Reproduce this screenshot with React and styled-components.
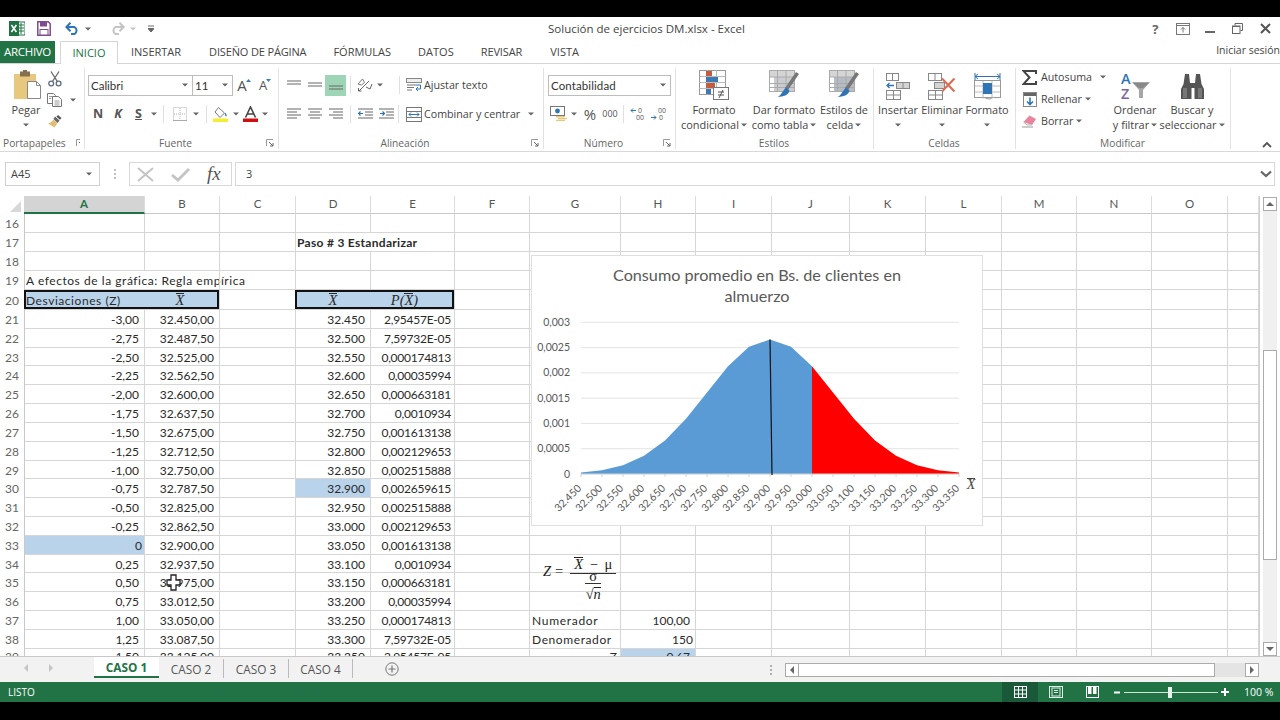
import React from 'react';
import styled, { createGlobalStyle } from 'styled-components';

const Global = createGlobalStyle`
  html, body { margin: 0; padding: 0; background: #000; }
  body { font-family: "Open Sans", "Noto Sans", sans-serif; overflow: hidden; }
  * { box-sizing: border-box; }
`;

const GREEN = '#217346';
const UI = '"Open Sans", "Noto Sans", sans-serif';
const CELL = 'Lato, "Open Sans", sans-serif';
const MATH = '"Liberation Serif", serif';

const Page = styled.div`width:1280px;height:720px;background:#000;display:flex;flex-direction:column;overflow:hidden;`;
const Black = styled.div`height:${p => p.$h}px;flex:none;background:#000;`;
const Win = styled.div`height:685px;flex:none;background:#fff;display:flex;flex-direction:column;color:#444;`;

/* title bar */
const TitleBar = styled.div`height:23px;flex:none;display:flex;align-items:center;`;
const Qat = styled.div`width:548px;flex:none;display:flex;align-items:center;padding-left:9px;`;
const QatSlot = styled.span`display:flex;align-items:center;margin-left:${p => p.$ml || 0}px;`;
const Title = styled.div`font-size:11.5px;color:#444;white-space:nowrap;`;
const WinCtl = styled.div`margin-left:auto;display:flex;align-items:center;padding-right:1px;`;
const WinBtn = styled.span`width:27.5px;display:flex;justify-content:center;align-items:center;font-weight:700;font-size:13px;color:#666;`;

/* tabs */
const TabRow = styled.div`height:23px;flex:none;display:flex;align-items:flex-end;position:relative;z-index:1;`;
const FileTab = styled.div`width:55px;height:22px;background:${GREEN};color:#fff;font-size:11.5px;padding-bottom:1px;display:flex;align-items:center;justify-content:center;letter-spacing:-.3px;`;
const ActiveTab = styled.div`margin-left:5px;width:58px;height:23px;margin-bottom:-1px;padding-bottom:2px;background:#fff;border:1px solid #d5d5d5;border-bottom:none;color:${GREEN};font-size:11px;display:flex;align-items:center;justify-content:center;`;
const Tab = styled.div`height:22px;font-size:11px;color:#444;padding-bottom:1px;display:flex;align-items:center;margin-left:${p => p.$ml}px;white-space:nowrap;letter-spacing:${p => p.$ls || 0}px;`;
const SignIn = styled.div`margin-left:auto;height:24px;font-size:10.5px;color:#444;display:flex;align-items:center;white-space:nowrap;align-self:flex-start;margin-top:-2px;`;

/* ribbon */
const Ribbon = styled.div`height:89px;flex:none;display:flex;border-top:1px solid #d5d5d5;border-bottom:1px solid #d8d8d8;padding-top:4px;`;
const Group = styled.div`width:${p => p.$w}px;flex:none;display:flex;flex-direction:column;border-right:1px solid #e2e2e2;margin-bottom:2px;`;
const GroupBody = styled.div`flex:1;display:flex;min-height:0;`;
const GroupFoot = styled.div`height:16px;flex:none;display:flex;align-items:center;font-size:10.2px;color:#666;white-space:nowrap;margin-bottom:-2px;padding-right:${p => p.$pr || 4}px;padding-left:${p => p.$pl || 0}px;`;
const FootText = styled.span`flex:1;text-align:center;`;
const FootGap = styled.span`width:10px;flex:none;`;
const Stack = styled.div`display:flex;flex-direction:column;width:${p => p.$w}px;flex:none;margin-left:${p => p.$ml || 0}px;margin-top:${p => p.$mt || 0}px;padding-top:${p => p.$pt || 0}px;`;
const Big = styled.div`width:${p => p.$w}px;flex:none;display:flex;flex-direction:column;align-items:center;margin-left:${p => p.$ml || 0}px;font-size:10.9px;color:#444;line-height:15px;`;
const BigIcon = styled.div`height:32px;flex:none;display:flex;align-items:flex-end;justify-content:center;margin-bottom:2px;padding-left:${p => p.$pl || 0}px;`;
const BigLine = styled.div`display:flex;align-items:center;gap:2px;white-space:nowrap;height:15px;`;
const Row = styled.div`height:${p => p.$h || 22}px;display:flex;align-items:center;flex:none;`;
const Field = styled.div`height:21px;width:${p => p.$w}px;flex:none;border:1px solid #bdbdbd;margin-left:${p => p.$ml ?? 0}px;display:flex;align-items:center;justify-content:space-between;font-size:11.5px;color:#333;padding:0 4px 0 2px;background:#fff;font-family:${p => p.$cell ? CELL : UI};letter-spacing:${p => p.$ls || 0}px;`;
const Slot = styled.span`width:${p => p.$w}px;flex:none;display:flex;justify-content:center;align-items:center;margin-left:${p => p.$ml || 0}px;`;
const Sep = styled.span`width:1px;height:18px;background:#e0e0e0;flex:none;margin-left:${p => p.$ml || 0}px;margin-right:${p => p.$mr || 0}px;`;
const Selected = styled.span`width:21px;height:21px;background:#9fd5b7;display:flex;align-items:center;justify-content:center;flex:none;`;
const Label = styled.span`font-size:10.7px;color:#444;white-space:nowrap;margin-left:${p => p.$ml || 0}px;`;
const Letter = styled.span`font-size:${p => p.$s || 12.5}px;font-weight:${p => p.$plain ? 400 : 700};color:#555;font-style:${p => p.$i ? 'italic' : 'normal'};text-decoration:${p => p.$u ? 'underline' : 'none'};font-family:${UI};`;
const GrowA = styled.span`font-size:${p => p.$s}px;color:#555;line-height:1;`;
const Collapse = styled.div`flex:1;display:flex;align-items:flex-end;justify-content:flex-end;padding:0 8px 3px 0;`;

/* formula bar */
const FormulaBar = styled.div`height:44px;flex:none;display:flex;padding:10px 5px 10px;align-items:stretch;`;
const NameBox = styled.div`width:95px;flex:none;border:1px solid #d0d0d0;display:flex;align-items:center;justify-content:space-between;padding:0 7px 1px 5px;font-size:11px;color:#444;`;
const Dots = styled.div`width:29px;flex:none;display:flex;align-items:center;justify-content:center;`;
const FnBox = styled.div`width:103px;flex:none;border:1px solid #d8d8d8;display:flex;align-items:center;gap:17px;padding-left:7px;`;
const Fx = styled.span`font-family:${MATH};font-style:italic;font-size:19px;color:#555;`;
const Input = styled.div`flex:1;margin-left:3px;border:1px solid #d8d8d8;display:flex;align-items:center;justify-content:space-between;padding:0 2px 1px 10px;font-size:11px;color:#444;`;

/* sheet */
const SheetArea = styled.div`height:460px;flex:none;display:flex;overflow:hidden;`;
const Sheet = styled.div`width:1260px;flex:none;position:relative;overflow:hidden;border-right:1px solid #d0d0d0;`;
const TEMPLATE = '25px 120px 75px 76px 75px 84px 75px 91px 75px 76px 78px 76px 76px 75px 75px 76px 31px';
const HeadRow = styled.div`display:grid;grid-template-columns:${TEMPLATE};height:18px;`;
const Corner = styled.div`border-right:1px solid #e0e0e0;display:flex;justify-content:flex-end;align-items:flex-end;padding:0 3px 2px 0;`;
const ColHead = styled.div`font-family:${CELL};font-size:11.5px;text-align:center;line-height:16px;height:18px;border-right:1px solid #dcdcdc;margin-left:${p => p.$on ? -1 : 0}px;background:${p => p.$on ? '#d4d4d4' : '#fff'};color:${p => p.$on ? GREEN : '#555'};font-weight:${p => p.$on ? 700 : 400};border-bottom:${p => p.$on ? `2px solid ${GREEN}` : '1px solid #c9c9c9'};`;
const RowLine = styled.div`display:grid;grid-template-columns:${TEMPLATE};height:${p => p.$h}px;`;
const RowHead = styled.div`font-family:${CELL};font-size:12px;color:#666;text-align:center;border-right:1px solid #c9c9c9;line-height:${p => p.$h + 1}px;`;
const Cell = styled.div`
  font-family:${CELL};font-size:12px;color:#2a2a2a;white-space:nowrap;
  line-height:${p => p.$h + 1}px;height:${p => p.$h}px;letter-spacing:${p => p.$ls || 0}px;
  border-right:${p => p.$spill ? 'none' : '1px solid #d6d6d6'};border-bottom:1px solid #d6d6d6;
  text-align:${p => p.$align || 'left'};
  padding:${p => p.$align ? `0 ${p.$pad ?? 0}px 0 0` : `0 0 0 ${p.$lp ?? 1}px`};
  font-weight:${p => p.$b ? 700 : 400};
  background:${p => p.$fill ? '#b9d3ea' : 'transparent'};
  margin-left:${p => p.$box === 'l' ? -1 : 0}px;
  box-shadow:${p => p.$box === 'l' ? 'inset 2px 2px 0 #111, inset 0 -2px 0 #111' : p.$box === 'r' ? 'inset -2px 2px 0 #111, inset 0 -2px 0 #111' : 'none'};
`;
const MathVar = styled.span`display:inline-block;font-family:${MATH};font-style:italic;font-size:14.5px;line-height:10px;border-top:1px solid currentColor;padding-top:1px;`;
const MathText = styled.span`font-family:${MATH};font-style:italic;font-size:14.5px;`;
const ChartBox = styled.div`position:absolute;left:531px;top:59px;width:452px;height:271px;background:#fff;border:1px solid #e0e0e0;`;
const Equation = styled.div`position:absolute;left:543px;top:361px;display:flex;align-items:flex-start;gap:7px;font-family:${MATH};font-size:14.5px;color:#222;`;
const EqLead = styled.div`margin-top:6px;line-height:16px;display:flex;gap:4px;white-space:nowrap;`;
const Frac = styled.div`display:flex;flex-direction:column;align-items:center;`;
const Num = styled.div`line-height:10px;height:17px;border-bottom:1px solid #333;width:46px;text-align:center;white-space:nowrap;word-spacing:3px;`;
const Den = styled.div`display:flex;flex-direction:column;align-items:center;`;
const DenTop = styled.div`border-bottom:1px solid #333;padding:0 4px;line-height:5px;height:10px;`;
const DenBottom = styled.div`line-height:20px;white-space:nowrap;`;
const Cursor = styled.svg`position:absolute;left:166px;top:378px;`;

/* v scrollbar */
const VBar = styled.div`width:20px;flex:none;display:flex;flex-direction:column;align-items:center;padding-top:1px;`;
const ScrollBtn = styled.div`width:14px;height:14px;border:1px solid #ababab;flex:none;display:flex;align-items:center;justify-content:center;background:#fff;`;
const VTrack = styled.div`flex:1;width:14px;background:#f0f0f0;padding-top:139px;`;
const VThumb = styled.div`height:210px;background:#fff;border:1px solid #ababab;`;

/* sheet tabs */
const TabsBar = styled.div`height:26px;flex:none;background:#f2f2f2;border-top:1px solid #c8c8c8;display:flex;align-items:flex-start;`;
const NavArrows = styled.div`width:94px;flex:none;display:flex;align-items:center;height:22px;gap:21px;padding-left:24px;`;
const SheetTab = styled.div`
  width:${p => p.$w}px;height:${p => p.$on ? 21 : 19}px;flex:none;display:flex;align-items:center;justify-content:center;font-size:11.8px;
  background:${p => p.$on ? '#fff' : 'transparent'};color:${p => p.$on ? GREEN : '#555'};font-weight:${p => p.$on ? 700 : 400};
  border-bottom:${p => p.$on ? `2px solid ${GREEN}` : 'none'};border-right:${p => p.$on ? 'none' : '1px solid #bbb'};margin-top:${p => p.$on ? 0 : 2}px;
`;
const AddSlot = styled.div`width:78px;flex:none;height:23px;display:flex;align-items:center;justify-content:center;`;
const HScroll = styled.div`margin-left:auto;width:510px;display:flex;align-items:center;height:25px;padding:0 21px 0 0;`;
const HDots = styled.div`width:15px;flex:none;display:flex;justify-content:flex-start;`;
const HBtn = styled.div`width:14px;height:14px;border:1px solid #ababab;flex:none;background:#fff;display:flex;align-items:center;justify-content:center;`;
const HThumb = styled.div`width:416px;height:14px;border:1px solid #ababab;border-left:none;background:#fff;flex:none;`;
const HTrack = styled.div`flex:1;height:14px;background:#e4e4e4;`;

/* status bar */
const StatusBar = styled.div`height:20px;flex:none;background:${GREEN};display:flex;align-items:center;color:#fff;font-size:10px;padding-left:8px;`;
const StatusRight = styled.div`margin-left:auto;display:flex;align-items:center;height:20px;padding-right:8px;`;
const ViewBtn = styled.div`width:36px;height:20px;display:flex;align-items:center;justify-content:center;background:${p => p.$on ? '#19593a' : 'transparent'};`;
const Zoom = styled.div`display:flex;align-items:center;margin-left:4px;gap:3px;`;
const ZoomTrack = styled.div`width:94px;height:1px;margin-left:1px;background:#cfe6d9;display:flex;align-items:center;padding-left:44px;`;
const ZoomThumb = styled.div`width:4px;height:11px;background:#e8f3ec;`;
const ZoomLabel = styled.div`margin-left:15px;font-size:10.5px;width:28px;white-space:nowrap;`;

/* ---------- drawings ---------- */
const Caret = ({ c = '#666', ml = 0 }) => (
  <svg width="6" height="4" style={{ marginLeft: ml, flex: 'none' }}><path d="M0 .5h6L3 3.5z" fill={c} /></svg>
);
const Lines = ({ rows, w = 16, h = 14, c = '#666' }) => (
  <svg width={w} height={h}>{rows.map(([a, b, y], i) => <path key={i} d={`M${a} ${y}H${b}`} stroke={c} strokeWidth="1" />)}</svg>
);
const XlLogo = () => (
  <svg width="16" height="15"><rect x="5" y="1" width="11" height="13" fill="#fff" stroke="#207245" /><path d="M9 4h6M9 7h6M9 10h6M12 2v11" stroke="#207245" /><rect x="0" y="0" width="10" height="15" fill="#207245" /><path d="M2.4 4l5 7M7.4 4l-5 7" stroke="#fff" strokeWidth="1.6" /></svg>
);
const Save = () => (
  <svg width="14" height="15"><path d="M.8.8h10.5l1.9 2v11.4H.8z" fill="#fff" stroke="#7d4b8f" strokeWidth="1.5" /><rect x="3" y="1" width="7" height="4.5" fill="#7d4b8f" /><rect x="3" y="8.5" width="8" height="5.5" fill="#fff" stroke="#7d4b8f" /></svg>
);
const Undo = ({ c, flip }) => (
  <svg width="15" height="13" style={flip ? { transform: 'scaleX(-1)' } : undefined}><path d="M2 5h7.5a4 4 0 0 1 0 7H6" fill="none" stroke={c} strokeWidth="2" /><path d="M5.5.8L1.4 5l4.1 4.2" fill="none" stroke={c} strokeWidth="2" /></svg>
);
const Customize = () => <svg width="6" height="8"><path d="M0 1h6M0 3.5h6L3 7z" stroke="#666" fill="#666" strokeWidth="1" /></svg>;
const RibbonMode = () => <svg width="14" height="12"><rect x=".5" y=".5" width="13" height="11" fill="none" stroke="#777" /><path d="M1 2.5h12" stroke="#777" /><path d="M7 9.5V4.5M5 6.5L7 4.5L9 6.5" stroke="#777" fill="none" /></svg>;
const MinIcon = () => <svg width="10" height="10"><path d="M0 8h10" stroke="#666" strokeWidth="2" /></svg>;
const RestoreIcon = () => <svg width="11" height="11"><path d="M3 2.5V.5h7.5v7H8.5" fill="none" stroke="#666" /><rect x=".5" y="3" width="7.5" height="7.5" fill="none" stroke="#666" /><path d="M1 3.5h7" stroke="#666" /></svg>;
const CloseIcon = () => <svg width="11" height="11"><path d="M1 1l9 9M10 1l-9 9" stroke="#555" strokeWidth="2" /></svg>;
const Paste = () => (
  <svg width="28" height="30"><rect x="0" y="4" width="22" height="25" fill="#e8c77f" /><rect x="6" y="1.5" width="10" height="5" fill="#86704d" /><rect x="9" y="0" width="4" height="3" fill="#86704d" /><path d="M13.5 11.5h9l4 4v13h-13z" fill="#fff" stroke="#888" /><path d="M22.5 11.5v4h4" fill="none" stroke="#888" /></svg>
);
const Scissors = () => (
  <svg width="14" height="16"><circle cx="3.2" cy="12.5" r="2.4" fill="none" stroke="#5d6d7e" strokeWidth="1.3" /><circle cx="10.6" cy="12.5" r="2.4" fill="none" stroke="#5d6d7e" strokeWidth="1.3" /><path d="M4.5 10.5L11 .5M9.3 10.5L3 .5" stroke="#666" strokeWidth="1.3" /></svg>
);
const CopyIco = () => (
  <svg width="15" height="14"><path d="M.5.5h6l2 2v8h-8z" fill="#fff" stroke="#777" /><path d="M5.5 3.5h6l3 3v7h-9z" fill="#fff" stroke="#777" /><path d="M2 3.5h3M2 5.5h2M7.5 8h5M7.5 10h5M7.5 12h5" stroke="#999" /></svg>
);
const Painter = () => (
  <svg width="16" height="14"><path d="M8 2.5l4.5 4-2 2.5-4-4z" fill="#666" /><path d="M11 1l3.5 3-1.5 1.8-3.5-3z" fill="#555" /><path d="M6.5 5.5l4 3.5-3 4.5L1 9.5c2-.2 4-1.8 5.5-4z" fill="#e2bd74" /></svg>
);
const SmallTri = ({ down }) => <svg width="5" height="4" style={{ marginBottom: 8, marginLeft: -1 }}><path d={down ? 'M0 0h5L2.5 3z' : 'M0 3h5L2.5 0z'} fill="#3d7ab5" /></svg>;
const BorderIco = () => (
  <svg width="14" height="14"><rect x=".5" y=".5" width="13" height="13" fill="none" stroke="#b3b3b3" strokeDasharray="1 1" /><path d="M7 1v12M1 7h12" stroke="#b3b3b3" strokeDasharray="1 1" /><path d="M0 13.5h14" stroke="#aaa" /></svg>
);
const FillIco = () => (
  <svg width="16" height="16"><path d="M5.5 1.5l6 5.5-4.5 4.5-5-5.5z" fill="#fff" stroke="#777" /><path d="M12 6.5c1.3 1.6 2 2.6 1.6 3.4-.6 1-2 .3-1.6-3.4z" fill="#3d7ab5" /><rect x="0" y="12.5" width="15" height="3.5" fill="#f5ee2e" /></svg>
);
const FontColor = () => (
  <svg width="15" height="16"><path d="M2.5 11.5L7.5 1l5 10.5M4.5 8h6" fill="none" stroke="#444" strokeWidth="1.6" /><rect x="0" y="12.5" width="15" height="3.5" fill="#d01010" /></svg>
);
const Orient = () => (
  <svg width="17" height="14"><path d="M2 13L12 3M4.5 13h-3v-3" fill="none" stroke="#666" /><path d="M1 6L5.5 1l2 3.5L4.5 7z" fill="none" stroke="#777" /><path d="M9 9l4 2 2-5" fill="none" stroke="#666" /></svg>
);
const OutIndent = ({ rev }) => (
  <svg width="15" height="12"><path d="M0 1h15M7 4h8M7 7h8M0 10h15" stroke="#666" /><path d={rev ? 'M1 5.5h4M3.5 3.5l2 2-2 2' : 'M5 5.5H1M2.5 3.5l-2 2 2 2'} fill="none" stroke="#2f75b5" strokeWidth="1.2" /></svg>
);
const WrapIco = () => (
  <svg width="16" height="15"><rect x=".5" y=".5" width="15" height="4" fill="#eee" stroke="#888" /><path d="M1 7h9M1 9.5h7M1 12h5" stroke="#777" /><path d="M10 7h4.5v4H10M12 9l-2 2 2 2" fill="none" stroke="#2f75b5" /></svg>
);
const MergeIco = () => (
  <svg width="16" height="15"><rect x=".5" y=".5" width="15" height="14" fill="#fff" stroke="#777" /><path d="M1 4.5h14M1 10.5h14" stroke="#777" /><path d="M3 7.5h10M3 7.5l2-2M3 7.5l2 2M13 7.5l-2-2M13 7.5l-2 2" fill="none" stroke="#2f75b5" /></svg>
);
const AccIco = () => (
  <svg width="17" height="15"><rect x=".5" y=".5" width="14" height="9" fill="#fff" stroke="#777" /><circle cx="7.5" cy="5" r="2.4" fill="#2f75b5" /><path d="M6 10h9v1.5H6zM8 12h9v1.3H8zM6 13.7h9V15H6z" fill="#e8c77f" /></svg>
);
const DecIco = ({ more }) => (
  <svg width="16" height="14"><path d={more ? 'M6 3.5H1M3 1.5l-2 2 2 2' : 'M0 10.5h5M3 8.5l2 2-2 2'} fill="none" stroke="#2f75b5" /><text x={more ? 8 : 7} y={6} fontSize="7" fill="#555" fontFamily={UI}>{more ? '0' : '00'}</text><text x={more ? 6 : 8} y={13} fontSize="7" fill="#555" fontFamily={UI}>{more ? '00' : '0'}</text></svg>
);
const CondFmt = () => (
  <svg width="30" height="30"><rect x=".5" y=".5" width="26" height="24" fill="#fff" stroke="#999" /><path d="M.5 6.5h26M.5 12.5h26M.5 18.5h26M8.5 0v25M17.5 0v25" stroke="#bbb" /><rect x="7" y="1" width="6" height="5" fill="#c55a3c" /><rect x="7" y="7" width="12" height="5" fill="#3d7ab5" /><rect x="7" y="13" width="9" height="5" fill="#c55a3c" /><rect x="7" y="19" width="5" height="5" fill="#3d7ab5" /><rect x="14.5" y="17.5" width="15" height="12" fill="#fff" stroke="#777" /><path d="M19 22h6M19 25h6M24 20l-4 8" stroke="#555" /></svg>
);
const TableFmt = ({ fill = '#c9cdd1' }) => (
  <svg width="30" height="30"><rect x=".5" y=".5" width="25" height="21" fill="#fff" stroke="#aaa" /><rect x="1" y="1" width="24" height="6" fill="#d5d5d5" /><rect x="5" y="7" width="20" height="14" fill={fill} /><path d="M.5 7h25M.5 13.5h25M.5 17.5h25M8.5 0v22M17 0v22" stroke="#aaa" /><path d="M30 4L19 20l-3-2L27 2z" fill="#777" /><path d="M17 17.5l3.5 3c-1 5-6 6-12 6.5 4-2 5-6 8.5-9.5z" fill="#2f75b5" /></svg>
);
const InsertIco = () => (
  <svg width="26" height="27"><rect x="1.5" y=".5" width="12" height="7" fill="#fff" stroke="#888" /><path d="M7.5 1v6" stroke="#888" /><rect x="1.5" y="17.5" width="14" height="9" fill="#fff" stroke="#888" /><path d="M8.5 18v8M2 22h13" stroke="#888" /><rect x="11.5" y="9.5" width="13" height="6" fill="#d4d4d4" stroke="#888" /><path d="M18 10v5" stroke="#888" /><path d="M9 12.5H2M4.5 10L2 12.5l2.5 2.5" fill="none" stroke="#2f75b5" strokeWidth="1.3" /></svg>
);
const DeleteIco = () => (
  <svg width="28" height="27"><rect x=".5" y=".5" width="13" height="7" fill="#fff" stroke="#888" /><path d="M7 1v6" stroke="#888" /><rect x=".5" y="17.5" width="14" height="9" fill="#fff" stroke="#888" /><path d="M7.5 18v8M1 22h13" stroke="#888" /><rect x="6.5" y="9.5" width="10" height="6" fill="#d4d4d4" stroke="#888" /><path d="M14 5.5l12.5 13M26.5 5.5L14 18.5" stroke="#dd6a50" strokeWidth="2" /></svg>
);
const FormatIco = () => (
  <svg width="27" height="29"><path d="M1 5.5h25" stroke="#2f75b5" /><path d="M1 2v7M26 2v7M4 3L1 5.500l3 2.500M23 3l3 2.500-3 2.500" fill="none" stroke="#2f75b5" /><rect x=".5" y="9.5" width="26" height="17" fill="#fff" stroke="#999" /><path d="M9 10v17M18 10v17M1 15h25M1 21h25" stroke="#bbb" /><rect x="9" y="12" width="9" height="11" fill="#2f75b5" /><path d="M8 27c3-1.500 4 1 7 1s4-3 7-1" fill="#fff" stroke="#999" /></svg>
);
const Sigma = () => <svg width="15" height="15"><path d="M14 4V1H1.5l6 6.500-6 6.500H14v-3" fill="none" stroke="#444" strokeWidth="2" /></svg>;
const FillDown = () => <svg width="14" height="15"><rect x=".5" y=".5" width="13" height="14" fill="#fff" stroke="#888" /><rect x="1" y="1" width="12" height="3" fill="#666" /><path d="M7 5.500v7M4 9.500l3 3 3-3" fill="none" stroke="#2f75b5" strokeWidth="1.6" /></svg>;
const Eraser = () => <svg width="15" height="14"><path d="M7.5 1.500L14 5l-4 6H5L1.500 8z" fill="#e8849c" /><path d="M0 13h11" stroke="#999" /><path d="M1.500 8L5 11h5" fill="#eee" stroke="#bbb" /></svg>;
const SortIco = () => (
  <svg width="31" height="29">
    <text x="1" y="13" fontSize="14.5" fontWeight="600" fill="#2f75b5" fontFamily={UI}>A</text>
    <text x="1" y="28" fontSize="14.5" fontWeight="600" fill="#8064a2" fontFamily={UI}>Z</text>
    <path d="M12 11h18l-7 8v8l-4 0v-8z" fill="#a6a6a6" /><path d="M13 12h16l-6 5h-4z" fill="#888" />
  </svg>
);
const Binoculars = () => (
  <svg width="25" height="27"><path d="M5 1h4l1 9h5l1-9h4l1.500 10 2.500 5v10h-9.500V15h-3v11H1V16l2.500-5z" fill="#555" /><path d="M3 15h4v10H3zM18 15h4v10h-4z" fill="#777" /></svg>
);
const Launcher = () => <svg width="8" height="8"><path d="M.5 7V.5H7" fill="none" stroke="#999" /><path d="M3 3l4 4M7 4v3H4" fill="none" stroke="#666" /></svg>;
const UpChev = () => <svg width="10" height="7"><path d="M1 6l4-4 4 4" fill="none" stroke="#555" strokeWidth="1.8" /></svg>;
const DownChev = () => <svg width="12" height="8"><path d="M1 1.500l5 4.500 5-4.500" fill="none" stroke="#666" strokeWidth="2.2" /></svg>;
const VDots = ({ c = '#aaa' }) => <svg width="2" height="10"><path d="M0 1h2M0 5h2M0 9h2" stroke={c} strokeWidth="1.5" /></svg>;
const CrossX = () => <svg width="17" height="15"><path d="M1 1l15 13M16 1L1 14" stroke="#c4c4c4" strokeWidth="2" /></svg>;
const Check = () => <svg width="19" height="15"><path d="M1 8l6 5L18 2" fill="none" stroke="#c4c4c4" strokeWidth="2.8" /></svg>;
const Tri = ({ d, c = '#666' }) => {
  const m = { u: 'M0 4h8L4 0z', d: 'M0 0h8L4 4z', l: 'M4 0v8L0 4z', r: 'M0 0v8l4-4z' };
  const hz = d === 'l' || d === 'r';
  return <svg width={hz ? 4 : 8} height={hz ? 8 : 4}><path d={m[d]} fill={c} /></svg>;
};
const PlusCircle = () => <svg width="14" height="14"><circle cx="7" cy="7" r="6.2" fill="none" stroke="#777" /><path d="M7 3.500v7M3.500 7h7" stroke="#777" strokeWidth="1.2" /></svg>;
const GridView = () => <svg width="13" height="12"><rect x=".5" y=".5" width="12" height="11" fill="none" stroke="#fff" /><path d="M4.500 1v10M8.500 1v10M1 4h11M1 8h11" stroke="#fff" /></svg>;
const PageView = () => <svg width="14" height="12"><rect x=".5" y=".5" width="13" height="11" fill="none" stroke="#dfeee6" /><rect x="3" y="2" width="8" height="8" fill="none" stroke="#dfeee6" /><path d="M5 4.500h4M5 6.500h4" stroke="#dfeee6" /></svg>;
const BreakView = () => <svg width="13" height="12"><rect x=".5" y=".5" width="12" height="11" fill="none" stroke="#fff" /><path d="M2 1h3.500v7H2zM7 1h3.500v7H7z" fill="#fff" /></svg>;

/* ---------- data ---------- */
const A = ['-3,00', '-2,75', '-2,50', '-2,25', '-2,00', '-1,75', '-1,50', '-1,25', '-1,00', '-0,75', '-0,50', '-0,25', '0', '0,25', '0,50', '0,75', '1,00', '1,25', '1,50'];
const B = ['32.450,00', '32.487,50', '32.525,00', '32.562,50', '32.600,00', '32.637,50', '32.675,00', '32.712,50', '32.750,00', '32.787,50', '32.825,00', '32.862,50', '32.900,00', '32.937,50', '32.975,00', '33.012,50', '33.050,00', '33.087,50', '33.125,00'];
const D = ['32.450', '32.500', '32.550', '32.600', '32.650', '32.700', '32.750', '32.800', '32.850', '32.900', '32.950', '33.000', '33.050', '33.100', '33.150', '33.200', '33.250', '33.300', '33.350'];
const E = ['2,95457E-05', '7,59732E-05', '0,000174813', '0,00035994', '0,000663181', '0,0010934', '0,001613138', '0,002129653', '0,002515888', '0,002659615', '0,002515888', '0,002129653', '0,001613138', '0,0010934', '0,000663181', '0,00035994', '0,000174813', '7,59732E-05', '2,95457E-05'];
const COLS = 'ABCDEFGHIJKLMNOP'.split('');
const VALS = [2.95457e-5, 7.59732e-5, 1.74813e-4, 3.5994e-4, 6.63181e-4, 1.0934e-3, 1.613138e-3, 2.129653e-3, 2.515888e-3, 2.659615e-3, 2.515888e-3, 2.129653e-3, 1.613138e-3, 1.0934e-3, 6.63181e-4, 3.5994e-4, 1.74813e-4, 7.59732e-5, 2.95457e-5];

function cellsFor(n) {
  const c = {};
  if (n === 17) c.D = { t: 'Paso # 3 Estandarizar', b: true, spill: true, ls: .3 };
  if (n === 19) c.A = { t: 'A efectos de la gráfica: Regla empírica', spill: true, ls: .55 };
  if (n === 20) {
    c.A = { t: 'Desviaciones (Z)', fill: true, box: 'l', spill: true, ls: .55, lp: 2 };
    c.B = { t: <MathVar>X</MathVar>, fill: true, box: 'r', align: 'center', pad: 4 };
    c.D = { t: <MathVar>X</MathVar>, fill: true, box: 'l', align: 'center', spill: true };
    c.E = { t: <MathText>P(<MathVar>X</MathVar>)</MathText>, fill: true, box: 'r', align: 'center', pad: 16 };
  }
  if (n >= 21) {
    const i = n - 21;
    c.A = { t: A[i], align: 'right', pad: A[i] === '0' ? 2 : 5, fill: A[i] === '0' };
    c.B = { t: B[i], align: 'right', pad: 5 };
    c.D = { t: D[i], align: 'right', pad: 5, fill: D[i] === '32.900' };
    c.E = { t: E[i], align: 'right', pad: 3, ls: -.25 };
  }
  if (n === 37) { c.G = { t: 'Numerador', ls: .7, lp: 2 }; c.H = { t: '100,00', align: 'right', pad: 5 }; }
  if (n === 38) { c.G = { t: 'Denomerador', ls: .6, lp: 2 }; c.H = { t: '150', align: 'right', pad: 2 }; }
  if (n === 39) { c.G = { t: 'Z', align: 'right', pad: 3 }; c.H = { t: '0,67', fill: true, align: 'right', pad: 5 }; }
  return c;
}
const rowHeight = n => (n <= 19 ? 19 : n === 20 ? 20 : n === 39 ? 15 : 18.82);
const ROWS = Array.from({ length: 24 }, (_, i) => i + 16);

/* chart: coordinates are local to the chart box */
const OX = 532, OY = 256;
const px = i => 581 + i * 21 - OX;
const py = v => 474 - v * 50567 - OY;
const area = (from, to) => {
  const pts = [];
  for (let i = from; i <= to; i++) pts.push(`${px(i)},${py(VALS[i])}`);
  return `${px(from)},${474 - OY} ${pts.join(' ')} ${px(to)},${474 - OY}`;
};
const YT = [['0,003', .003], ['0,0025', .0025], ['0,002', .002], ['0,0015', .0015], ['0,001', .001], ['0,0005', .0005], ['0', 0]];

const Chart = () => (
  <svg width="450" height="269" style={{ display: 'block' }} fontFamily={CELL}>
    <text x="225" y="24.5" textAnchor="middle" fontSize="16.2" fill="#595959">Consumo promedio en Bs. de clientes en</text>
    <text x="225" y="46" textAnchor="middle" fontSize="16.2" fill="#595959">almuerzo</text>
    {YT.map(([l, v]) => (
      <g key={l}>
        <path d={`M${px(0)} ${py(v)}H${px(18)}`} stroke="#e4e4e4" />
        <text x="38" y={py(v) + 3.5} textAnchor="end" fontSize="10.5" fill="#595959">{l}</text>
      </g>
    ))}
    <polygon points={area(0, 11)} fill="#5b9bd5" />
    <polygon points={area(11, 18)} fill="#ff0000" />
    <path d={`M${px(0)} ${474 - OY}H${px(18)}`} stroke="#d4d4d4" />
    <path d={`M${px(9)} ${py(VALS[9])}L${px(9) + 2} ${475 - OY}`} stroke="#111" strokeWidth="1.2" />
    {D.map((l, i) => (
      <g key={l}>
        <path d={`M${px(i)} ${474 - OY}v3`} stroke="#d4d4d4" />
        <text transform={`translate(${px(i) + 1} ${489 - OY}) rotate(-45)`} textAnchor="end" fontSize="10.5" fill="#595959">{l}</text>
      </g>
    ))}
    <text x={439} y={233} textAnchor="middle" fontFamily={MATH} fontStyle="italic" fontSize="14" fill="#444">X</text>
    <path d="M435 222.500h8" stroke="#444" />
  </svg>
);

export default function App() {
  return (
    <Page>
      <Global />
      <Black $h={17} />
      <Win>
        <TitleBar>
          <Qat>
            <XlLogo />
            <QatSlot $ml={12}><Save /></QatSlot>
            <QatSlot $ml={14}><Undo c="#2f75b5" /></QatSlot>
            <QatSlot $ml={5}><Caret /></QatSlot>
            <QatSlot $ml={19}><Undo c="#c4c4c4" flip /></QatSlot>
            <QatSlot $ml={5}><Caret c="#c4c4c4" /></QatSlot>
            <QatSlot $ml={12}><Customize /></QatSlot>
          </Qat>
          <Title>Solución de ejercicios DM.xlsx - Excel</Title>
          <WinCtl>
            <WinBtn>?</WinBtn>
            <WinBtn><RibbonMode /></WinBtn>
            <WinBtn><MinIcon /></WinBtn>
            <WinBtn><RestoreIcon /></WinBtn>
            <WinBtn><CloseIcon /></WinBtn>
          </WinCtl>
        </TitleBar>
        <TabRow>
          <FileTab>ARCHIVO</FileTab>
          <ActiveTab>INICIO</ActiveTab>
          <Tab $ml={13}>INSERTAR</Tab>
          <Tab $ml={28} $ls={-.15}>DISEÑO DE PÁGINA</Tab>
          <Tab $ml={27}>FÓRMULAS</Tab>
          <Tab $ml={27}>DATOS</Tab>
          <Tab $ml={27} $ls={-.1}>REVISAR</Tab>
          <Tab $ml={28}>VISTA</Tab>
          <SignIn>Iniciar sesión</SignIn>
        </TabRow>
        <Ribbon>
          <Group $w={85}>
            <GroupBody>
              <Big $w={40} $ml={6}>
                <BigIcon $pl={3}><Paste /></BigIcon>
                <BigLine>Pegar</BigLine>
                <BigLine><Caret /></BigLine>
              </Big>
              <Stack $w={39}>
                <Row $h={21}><Slot $w={17}><Scissors /></Slot></Row>
                <Row $h={21}><Slot $w={17}><CopyIco /></Slot><Caret ml={7} /></Row>
                <Row $h={21}><Slot $w={17}><Painter /></Slot></Row>
              </Stack>
            </GroupBody>
            <GroupFoot $pl={3}>Portapapeles<FootGap /><Launcher /></GroupFoot>
          </Group>
          <Group $w={194}>
            <GroupBody>
              <Stack $w={190} $pt={3}>
                <Row $h={28}>
                  <Field $w={105} $ml={3} $cell>Calibri<Caret /></Field>
                  <Field $w={41} $ml={-1} $cell>11<Caret /></Field>
                  <Slot $w={22}><GrowA $s={15}>A</GrowA><SmallTri /></Slot>
                  <Slot $w={20}><GrowA $s={13}>A</GrowA><SmallTri down /></Slot>
                </Row>
                <Row $h={29}>
                  <Slot $w={20} $ml={3}><Letter>N</Letter></Slot>
                  <Slot $w={20}><Letter $i>K</Letter></Slot>
                  <Slot $w={21}><Letter $u>S</Letter></Slot>
                  <Caret ml={2} />
                  <Sep $ml={6} />
                  <Slot $w={27} $ml={2}><BorderIco /></Slot>
                  <Caret />
                  <Sep $ml={7} />
                  <Slot $w={22} $ml={3}><FillIco /></Slot>
                  <Caret ml={1} />
                  <Slot $w={21} $ml={1}><FontColor /></Slot>
                  <Caret ml={1} />
                </Row>
              </Stack>
            </GroupBody>
            <GroupFoot $pr={4}><FootText>Fuente</FootText><Launcher /></GroupFoot>
          </Group>
          <Group $w={265}>
            <GroupBody>
              <Stack $w={262} $pt={5}>
                <Row $h={24}>
                  <Slot $w={21} $ml={4}><Lines rows={[[1, 15, 3], [1, 15, 6]]} /></Slot>
                  <Slot $w={21}><Lines rows={[[1, 15, 5], [1, 15, 8]]} /></Slot>
                  <Selected><Lines rows={[[2, 16, 8], [2, 16, 11]]} w={17} /></Selected>
                  <Sep $ml={4} />
                  <Slot $w={24} $ml={2}><Orient /></Slot>
                  <Caret />
                  <Sep $ml={16} />
                  <Slot $w={21} $ml={3}><WrapIco /></Slot>
                  <Label>Ajustar texto</Label>
                </Row>
                <Row $h={34}>
                  <Slot $w={21} $ml={4}><Lines rows={[[1, 15, 2], [1, 11, 5], [1, 15, 8], [1, 11, 11]]} /></Slot>
                  <Slot $w={21}><Lines rows={[[1, 15, 2], [3, 13, 5], [1, 15, 8], [3, 13, 11]]} /></Slot>
                  <Slot $w={21}><Lines rows={[[1, 15, 2], [5, 15, 5], [1, 15, 8], [5, 15, 11]]} /></Slot>
                  <Sep $ml={4} />
                  <Slot $w={24} $ml={2}><OutIndent /></Slot>
                  <Slot $w={18}><OutIndent rev /></Slot>
                  <Sep $ml={3} />
                  <Slot $w={21} $ml={4}><MergeIco /></Slot>
                  <Label>Combinar y centrar</Label>
                  <Caret ml={8} />
                </Row>
              </Stack>
            </GroupBody>
            <GroupFoot $pr={4}><FootText>Alineación</FootText><Launcher /></GroupFoot>
          </Group>
          <Group $w={132}>
            <GroupBody>
              <Stack $w={128} $pt={3}>
                <Row $h={28}><Field $w={123} $ml={4} $cell $ls={.1}>Contabilidad<Caret /></Field></Row>
                <Row $h={29}>
                  <Slot $w={20} $ml={4}><AccIco /></Slot>
                  <Caret ml={3} />
                  <Slot $w={24} $ml={1}><Letter $plain $s={15}>%</Letter></Slot>
                  <Slot $w={16}><Letter $plain $s={9}>000</Letter></Slot>
                  <Sep $ml={5} />
                  <Slot $w={22} $ml={3}><DecIco more /></Slot>
                  <Slot $w={19}><DecIco /></Slot>
                </Row>
              </Stack>
            </GroupBody>
            <GroupFoot $pr={4}><FootText>Número</FootText><Launcher /></GroupFoot>
          </Group>
          <Group $w={198}>
            <GroupBody>
              <Big $w={66} $ml={5}>
                <BigIcon><CondFmt /></BigIcon>
                <BigLine>Formato</BigLine>
                <BigLine>condicional <Caret /></BigLine>
              </Big>
              <Big $w={70} $ml={2}>
                <BigIcon><TableFmt /></BigIcon>
                <BigLine>Dar formato</BigLine>
                <BigLine>como tabla <Caret /></BigLine>
              </Big>
              <Big $w={50}>
                <BigIcon><TableFmt fill="#b5bcc3" /></BigIcon>
                <BigLine>Estilos de</BigLine>
                <BigLine>celda <Caret /></BigLine>
              </Big>
            </GroupBody>
            <GroupFoot $pr={1}><FootText>Estilos</FootText></GroupFoot>
          </Group>
          <Group $w={142}>
            <GroupBody>
              <Big $w={44} $ml={2}>
                <BigIcon><InsertIco /></BigIcon>
                <BigLine>Insertar</BigLine>
                <BigLine><Caret /></BigLine>
              </Big>
              <Big $w={44}>
                <BigIcon><DeleteIco /></BigIcon>
                <BigLine>Eliminar</BigLine>
                <BigLine><Caret /></BigLine>
              </Big>
              <Big $w={44} $ml={1}>
                <BigIcon><FormatIco /></BigIcon>
                <BigLine>Formato</BigLine>
                <BigLine><Caret /></BigLine>
              </Big>
            </GroupBody>
            <GroupFoot $pr={1}><FootText>Celdas</FootText></GroupFoot>
          </Group>
          <Group $w={215}>
            <GroupBody>
              <Stack $w={84} $ml={6} $pt={1} $mt={-3}>
                <Row $h={22}><Slot $w={15}><Sigma /></Slot><Label $ml={4}>Autosuma</Label><Caret ml={8} /></Row>
                <Row $h={22}><Slot $w={15}><FillDown /></Slot><Label $ml={4}>Rellenar</Label><Caret ml={3} /></Row>
                <Row $h={22}><Slot $w={15}><Eraser /></Slot><Label $ml={4}>Borrar</Label><Caret ml={3} /></Row>
              </Stack>
              <Big $w={58}>
                <BigIcon><SortIco /></BigIcon>
                <BigLine>Ordenar</BigLine>
                <BigLine>y filtrar <Caret /></BigLine>
              </Big>
              <Big $w={56}>
                <BigIcon><Binoculars /></BigIcon>
                <BigLine>Buscar y</BigLine>
                <BigLine>seleccionar <Caret /></BigLine>
              </Big>
            </GroupBody>
            <GroupFoot $pr={1}><FootText>Modificar</FootText></GroupFoot>
          </Group>
          <Collapse><UpChev /></Collapse>
        </Ribbon>
        <FormulaBar>
          <NameBox>A45<Caret /></NameBox>
          <Dots><VDots /></Dots>
          <FnBox><CrossX /><Check /><Fx>fx</Fx></FnBox>
          <Input>3<DownChev /></Input>
        </FormulaBar>
        <SheetArea>
          <Sheet>
            <HeadRow>
              <Corner><svg width="11" height="11"><path d="M11 0v11H0z" fill="#d8d8d8" /></svg></Corner>
              {COLS.map((c, i) => <ColHead key={c} $on={i === 0}>{i < 15 ? c : ''}</ColHead>)}
            </HeadRow>
            {ROWS.map(n => {
              const h = rowHeight(n);
              const data = cellsFor(n);
              return (
                <RowLine key={n} $h={h}>
                  <RowHead $h={h}>{n}</RowHead>
                  {COLS.map(c => {
                    const d = data[c] || {};
                    return <Cell key={c} $h={h} $align={d.align} $pad={d.pad} $lp={d.lp} $b={d.b} $fill={d.fill} $box={d.box} $spill={d.spill} $ls={d.ls}>{d.t}</Cell>;
                  })}
                </RowLine>
              );
            })}
            <ChartBox><Chart /></ChartBox>
            <Equation>
              <EqLead><MathText>Z</MathText><span>=</span></EqLead>
              <Frac>
                <Num><MathVar>X</MathVar> − μ</Num>
                <Den>
                  <DenTop>σ</DenTop>
                  <DenBottom>√<MathVar>n</MathVar></DenBottom>
                </Den>
              </Frac>
            </Equation>
            <Cursor width="15" height="17"><path d="M5 1h5v5h4v5h-4v5H5v-5H1V6h4z" fill="#fff" stroke="#222" strokeWidth="1.3" /></Cursor>
          </Sheet>
          <VBar>
            <ScrollBtn><Tri d="u" /></ScrollBtn>
            <VTrack><VThumb /></VTrack>
            <ScrollBtn><Tri d="d" /></ScrollBtn>
          </VBar>
        </SheetArea>
        <TabsBar>
          <NavArrows><Tri d="l" c="#c4c4c4" /><Tri d="r" c="#c4c4c4" /></NavArrows>
          <SheetTab $w={65} $on>CASO 1</SheetTab>
          <SheetTab $w={65}>CASO 2</SheetTab>
          <SheetTab $w={65}>CASO 3</SheetTab>
          <SheetTab $w={64}>CASO 4</SheetTab>
          <AddSlot><PlusCircle /></AddSlot>
          <HScroll>
            <HDots><VDots c="#999" /></HDots>
            <HBtn><Tri d="l" /></HBtn>
            <HThumb />
            <HTrack />
            <HBtn><Tri d="r" /></HBtn>
          </HScroll>
        </TabsBar>
        <StatusBar>
          LISTO
          <StatusRight>
            <ViewBtn $on><GridView /></ViewBtn>
            <ViewBtn><PageView /></ViewBtn>
            <ViewBtn><BreakView /></ViewBtn>
            <Zoom>
              <svg width="6" height="3"><path d="M0 1.500h6" stroke="#fff" strokeWidth="2" /></svg>
              <ZoomTrack><ZoomThumb /></ZoomTrack>
              <svg width="8" height="8"><path d="M0 4h8M4 0v8" stroke="#fff" strokeWidth="2" /></svg>
            </Zoom>
            <ZoomLabel>100 %</ZoomLabel>
          </StatusRight>
        </StatusBar>
      </Win>
      <Black $h={18} />
    </Page>
  );
}
